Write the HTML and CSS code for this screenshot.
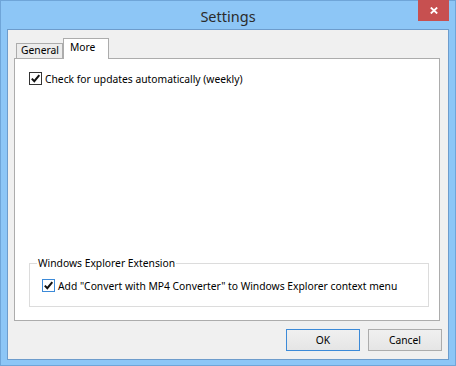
FILE: index.html
```html
<!DOCTYPE html>
<html>
<head>
<meta charset="utf-8">
<title>Settings</title>
<link rel="stylesheet" href="styles.css">
</head>
<body>
<div class="window">
  <div class="titlebar">
    <span class="title">Settings</span>
    <button class="close" aria-label="Close">
      <svg width="8" height="7" viewBox="0 0 8 7"><path d="M0.8 0.5 L7.2 6.5 M7.2 0.5 L0.8 6.5" stroke="#fff" stroke-width="1.8" fill="none"/></svg>
    </button>
  </div>
  <div class="client">
    <div class="tabs">
      <div class="tab">General</div>
      <div class="tab active">More</div>
    </div>
    <div class="panel">
      <label class="check">
        <span class="box"><svg width="11" height="11" viewBox="0 0 11 11"><path d="M1.8 5.6 L4.3 8.2 L9.3 2.2" stroke="#111" stroke-width="2" fill="none"/></svg></span>
        <span>Check for updates automatically (weekly)</span>
      </label>
      <fieldset class="group">
        <legend>Windows Explorer Extension</legend>
        <label class="check focus">
          <span class="box"><svg width="11" height="11" viewBox="0 0 11 11"><path d="M1.8 5.6 L4.3 8.2 L9.3 2.2" stroke="#111" stroke-width="2" fill="none"/></svg></span>
          <span>Add "Convert with MP4 Converter" to Windows Explorer context menu</span>
        </label>
      </fieldset>
    </div>
    <div class="buttons">
      <button class="btn default">OK</button>
      <button class="btn">Cancel</button>
    </div>
  </div>
</div>
</body>
</html>
```
FILE: styles.css
```css
* { box-sizing: border-box; }
html, body { margin: 0; padding: 0; }
body {
  width: 456px;
  height: 366px;
  font-family: "Noto Sans", "Liberation Sans", sans-serif;
  font-size: 10.3px;
  color: #000;
}
.window {
  width: 456px;
  height: 366px;
  background: #8dc6f6;
  border: 1px solid #6fa5d8;
  padding: 0 6px 5px 6px;
  display: flex;
  flex-direction: column;
}
.titlebar {
  height: 28px;
  display: grid;
  grid-template-columns: 1fr auto 1fr;
  align-items: center;
}
.title {
  grid-column: 2;
  font-size: 14.5px;
  color: #2b2b2b;
  margin-top: 2px;
}
.close {
  grid-column: 3;
  justify-self: end;
  align-self: start;
  margin-top: -1px;
  margin-right: 0;
  width: 31px;
  height: 21px;
  border: 0;
  padding: 0;
  background: #c75050;
  display: flex;
  align-items: center;
  justify-content: center;
}
.client {
  flex: 1;
  background: #f0f0f0;
  border: 1px solid #6d9ccc;
  padding: 8px 6px 8px 6px;
  display: flex;
  flex-direction: column;
}
.tabs {
  display: flex;
  align-items: flex-end;
  height: 20px;
  padding-left: 2px;
}
.tab {
  height: 15px;
  border: 1px solid #acacac;
  border-bottom: 0;
  background: #ececec;
  padding: 0 0 0 4px;
  line-height: 13px;
  width: 47px;
}
.tab.active {
  position: relative;
  z-index: 1;
  height: 21px;
  margin-bottom: -1px;
  width: 46px;
  background: #fff;
  line-height: 16px;
  padding-left: 6px;
}
.panel {
  height: 263px;
  margin-right: 2px;
  background: #fff;
  border: 1px solid #acacac;
  padding: 13px 10px 13px 14px;
  display: flex;
  flex-direction: column;
}
.check {
  display: flex;
  align-items: center;
  gap: 3px;
  height: 13px;
}
.box {
  width: 13px;
  height: 13px;
  border: 1px solid #333;
  background: #fff;
  display: flex;
  align-items: center;
  justify-content: center;
  flex: none;
}
.check.focus .box { border-color: #3c8ad8; }
.group {
  margin: auto 0 0 0;
  padding: 9px 0 14px 0;
  border: 1px solid #dcdcdc;
  min-width: 0;
}
.group .check { margin-left: 12px; }
.group legend {
  margin-left: 7px;
  padding: 0 1px;
  line-height: 14px;
  color: #000;
}
.buttons {
  display: flex;
  justify-content: flex-end;
  gap: 8px;
  margin-top: 8px;
}
.btn {
  width: 74px;
  height: 22px;
  font-family: inherit;
  font-size: 10.3px;
  color: #000;
  border: 1px solid #acacac;
  background: linear-gradient(#f0f0f0, #e5e5e5);
  padding: 0;
}
.btn.default { border-color: #3c8ad8; }
```
